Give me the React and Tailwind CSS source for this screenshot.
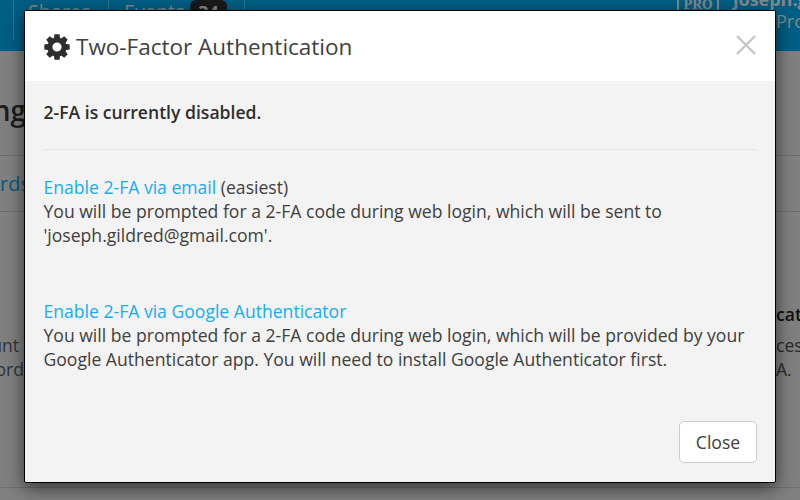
import React from "react";

const teeth = [0, 45, 90, 135, 180, 225, 270, 315];

const GearIcon = () => (
  <svg viewBox="-13 -13 26 26" className="w-[26px] h-[26px] shrink-0">
    {teeth.map((angle) => (
      <path
        key={angle}
        d="M-3.2 -8 L-2.5 -12.7 H2.5 L3.2 -8 Z"
        transform={`rotate(${angle})`}
        fill="#2d2d2f"
      />
    ))}
    <circle r="7.1" fill="none" stroke="#2d2d2f" strokeWidth="5" />
  </svg>
);

const TopBar = () => (
  <header className="h-[51px] bg-[#005f84] flex items-start justify-between overflow-hidden whitespace-nowrap text-[#84898c]">
    <nav className="flex h-10 text-[19.8px] leading-6">
      <div className="w-[14px] border-r border-[#2b7590]" />
      <div className="w-[95px] pl-[14px] border-r border-[#2b7590]">
        <div>Shares</div>
      </div>
      <div className="w-[136px] pl-[15px] flex gap-[6px] border-r border-[#2b7590]">
        <div className="w-[60px]">Events</div>
        <span className="h-6 w-[37px] rounded-md bg-[#191919] text-center text-[18px] font-bold leading-[24px]">
          34
        </span>
      </div>
    </nav>
    <div className="flex w-[123px]">
      <span className="-mt-2 h-6 w-[42px] shrink-0 border-2 border-[#84898c] text-center font-['Noto_Serif','DejaVu_Serif',serif] text-[14px] font-bold leading-[20px]">
        PRO
      </span>
      <div className="-mt-[11px] pl-[14px]">
        <div className="text-[18px] font-bold leading-[21px]">joseph.gildred</div>
        <div className="pl-[43px] text-[18px] leading-[23px]">Profile</div>
      </div>
    </div>
  </header>
);

const PageContent = () => (
  <main className="h-[449px] overflow-hidden whitespace-nowrap text-[#292b2c]">
    <div className="flex h-[104px] w-[26px] justify-end pt-[38px] text-[28px] font-semibold leading-[42px] text-[#1c1c1c]">
      <span>Setting</span>
    </div>
    <div className="flex h-[57px] items-center border-y border-[#6c6c6c] text-[20px] text-[#0b5a7c]">
      <div className="flex w-[30px] justify-end">Passwords</div>
    </div>
    <div className="flex h-[276px] justify-between border-b border-[#707070] pt-[90px] text-[17.6px] leading-6">
      <div className="flex w-[24px] flex-col items-end pt-[31px] text-[#2f373c]">
        <span className="pr-[5px]">account</span>
        <span>password</span>
      </div>
      <div className="w-[24px]">
        <div className="pb-[7px] font-semibold text-[#111]">cation</div>
        <div>cess</div>
        <div>A.</div>
      </div>
    </div>
  </main>
);

const TwoFactorModal = () => (
  <div className="absolute left-[24px] top-[10px] flex h-[473px] w-[752px] flex-col rounded-[2px] border border-black bg-[#f3f3f3] shadow-[0_5px_18px_rgba(0,0,0,0.6)]">
    <div className="flex h-[70px] items-center justify-between bg-white pl-[18.5px] pr-[19px]">
      <div className="flex items-center gap-[6.5px] pt-[2px]">
        <GearIcon />
        <h4 className="-mt-px text-[22.5px] leading-8 text-[#404040]">
          Two-Factor Authentication
        </h4>
      </div>
      <button aria-label="Dismiss" className="-mt-[3px]">
        <svg viewBox="0 0 20 20" className="block h-5 w-5">
          <path d="M1 1 L19 19 M19 1 L1 19" stroke="#c6c6c6" strokeWidth="2.4" />
        </svg>
      </button>
    </div>
    <div className="flex grow flex-col pl-[18.5px] pr-[18px] pt-[19px] pb-[19px] text-[17.58px] leading-6 text-[#404040]">
      <p className="font-semibold text-[#2e2e2e]">2-FA is currently disabled.</p>
      <hr className="mt-[25px] border-[#e6e6e6]" />
      <p className="mt-[25px]">
        <span className="text-[#16aeef]">Enable 2-FA via email</span> (easiest)
        <br />
        You will be prompted for a 2-FA code during web login, which will be sent to
        <br />
        'joseph.gildred@gmail.com'.
      </p>
      <p className="mt-[52px] whitespace-nowrap">
        <span className="text-[#16aeef]">Enable 2-FA via Google Authenticator</span>
        <br />
        You will be prompted for a 2-FA code during web login, which will be provided by your
        <br />
        Google Authenticator app. You will need to install Google Authenticator first.
      </p>
      <button className="mt-auto h-[42px] w-[78px] self-end rounded-[5px] border border-[#ccc] bg-white">
        Close
      </button>
    </div>
  </div>
);

export default function App() {
  return (
    <div className="relative h-[500px] w-[800px] overflow-hidden bg-[#808080] font-['Open_Sans',sans-serif]">
      <TopBar />
      <PageContent />
      <TwoFactorModal />
    </div>
  );
}
